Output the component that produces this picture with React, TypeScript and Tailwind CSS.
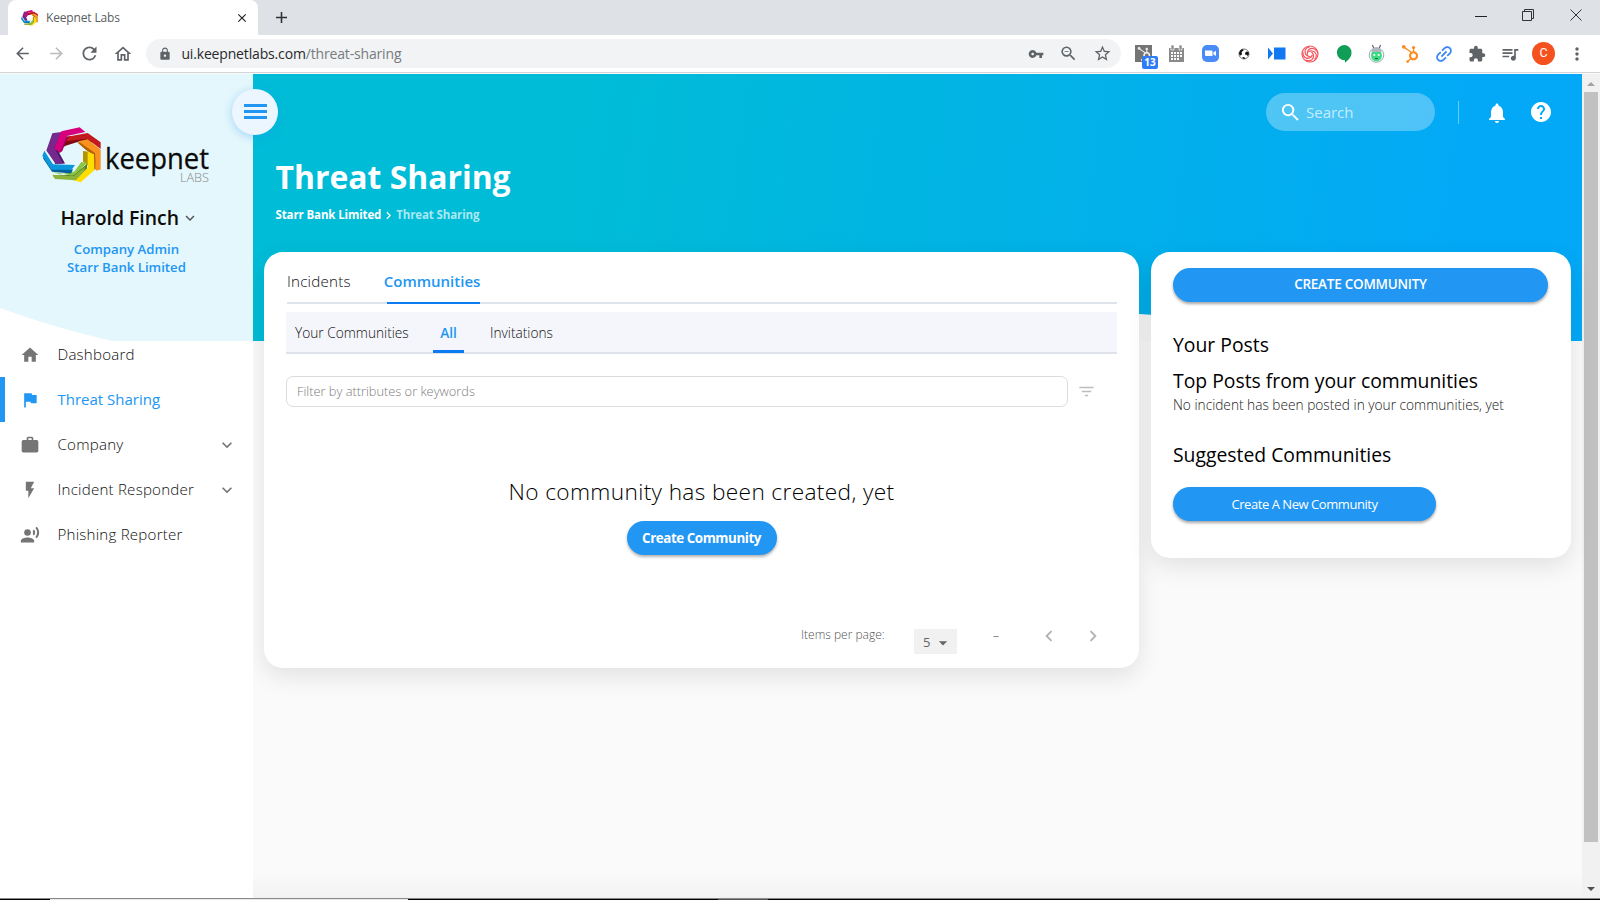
import type { ReactNode } from "react";
import {
  MdArrowBack,
  MdArrowForward,
  MdRefresh,
  MdOutlineHome,
  MdLock,
  MdVpnKey,
  MdOutlineZoomOut,
  MdStarBorder,
  MdExtension,
  MdQueueMusic,
  MdMoreVert,
  MdHome,
  MdFlag,
  MdWork,
  MdFlashOn,
  MdRecordVoiceOver,
  MdSearch,
  MdNotifications,
  MdHelp,
  MdFilterList,
  MdChevronLeft,
  MdChevronRight,
  MdExpandMore,
  MdArrowDropDown,
  MdClose,
  MdAdd,
  MdLink,
} from "react-icons/md";
import { FaHubspot } from "react-icons/fa";

function Ring({ width, height }: { width: number; height: number }) {
  return (
    <svg width={width} height={height} viewBox="127 171 177 170" preserveAspectRatio="none" className="shrink-0">
      <path d="M200 200L258 196L290 220L262 214L236 216L198 228L184 236z" fill="#7d0b10" />
      <path d="M206 200L264 189L303 217V238L262 207L200 214z" fill="#c4191f" />
      <path d="M183 187L188 195L169 232L196 282L166 283L160 235z" fill="#4a1769" />
      <path d="M158 190L184 186L164 235L190 282L168 283L140 242z" fill="#75298c" />
      <path d="M198 205L204 200L188 244L180 250L170 240z" fill="#9a005e" />
      <path d="M185 184L240 172L257 186L202 198L182 246L166 240L165 232z" fill="#d6007f" />
      <path d="M233 218L248 216L290 248L288 300L282 300L281 256L258 240z" fill="#b85f00" />
      <path d="M236 214L264 208L303 240V300L289 304L286 250L258 230z" fill="#f7931e" />
      <path d="M250 244L268 246V292L250 276z" fill="#b09500" />
      <path d="M264 246L283 254L284 302L243 339L222 333L264 294z" fill="#ffdd00" />
      <path d="M222 316L262 283V296L230 328L165 326L160 318z" fill="#4e7a22" />
      <path d="M155 306L182 315L224 306L245 277L262 280L232 310L218 319z" fill="#8dc63f" />
      <path d="M158 316L222 320L258 290L250 310L228 333L166 329z" fill="#8ab53a" />
      <path d="M136 254L160 294L220 300L214 312L157 307L130 266z" fill="#00619c" />
      <path d="M134 243L160 284L226 286L216 301L155 301L128 258z" fill="#0c97dd" />
    </svg>
  );
}

function Cell({ children }: { children: ReactNode }) {
  return <div className="flex w-[33.35px] shrink-0 items-center justify-center">{children}</div>;
}

function Browser() {
  return (
    <header className="h-[74px] shrink-0">
      <div className="flex h-[35px] bg-[#dee1e6]">
        <div className="ml-2 flex w-[250px] items-center rounded-t-lg bg-white pr-[9px] pl-[13px]">
          <Ring width={17} height={16} />
          <span className="ml-[8px] flex-1 text-[12px] tracking-[-0.150px] text-[#5a5d61]">Keepnet Labs</span>
          <MdClose size={14} color="#202124" />
        </div>
        <MdAdd size={19} color="#303235" className="mt-2 ml-[13.500px]" />
        <div className="ml-auto flex items-center gap-[36px] pr-[18px] pb-[5px]">
          <svg width="12" height="12" fill="none" stroke="#222" className="mt-px -mr-px">
            <path d="M0 6.5H12" />
          </svg>
          <svg width="12" height="12" fill="none" stroke="#333">
            <path d="M.5 2.5h9v9h-9z M2.5 2.5v-2h9v9h-2" />
          </svg>
          <svg width="12" height="12" fill="none" stroke="#333">
            <path d="M.5 .5l11 11M11.5 .5l-11 11" />
          </svg>
        </div>
      </div>
      <div className="flex h-[38px] items-center border-b border-[#d2d4d8] bg-white pl-[6px] text-[#5f6368]">
        <Cell><MdArrowBack size={19} /></Cell>
        <Cell><MdArrowForward size={19} color="#bbb" /></Cell>
        <Cell><MdRefresh size={21} /></Cell>
        <Cell><MdOutlineHome size={20} /></Cell>
        <div className="ml-[6.500px] flex h-[29px] w-[975px] items-center rounded-full bg-[#f1f3f4] pr-[2px]">
          <MdLock size={14} className="ml-[12px]" />
          <span className="ml-[9.500px] flex-1 text-[14px] tracking-[-0.160px] text-[#777b80]">
            <span className="text-[#27292c]">ui.keepnetlabs.com</span>/threat-sharing
          </span>
          <Cell><MdVpnKey size={16} /></Cell>
          <Cell><MdOutlineZoomOut size={19} /></Cell>
          <Cell><MdStarBorder size={19} /></Cell>
        </div>
        <div className="ml-[6px] flex">
          <Cell>
            <div className="relative flex h-[17px] w-[17px] items-center justify-center bg-[#757575]">
              <FaHubspot size={14} color="#eee" />
              <span className="absolute top-[11px] left-[7px] flex h-[13px] w-[16px] items-center justify-center rounded-[2px] bg-[#2f7df6] text-[10px] font-bold text-white">
                13
              </span>
            </div>
          </Cell>
          <Cell>
            <svg width="17" height="18" viewBox="0 0 17 18">
              <path d="M1 3h15v14H1z" fill="#8a8a8a" />
              <path d="M3 0h3v5H3zM11 0h3v5h-3z" fill="#8a8a8a" stroke="#fff" strokeWidth=".7" />
              <path d="M3 7h2v2H3zM6 7h2v2H6zM9 7h2v2H9zM12 7h2v2h-2zM3 10h2v2H3zM6 10h2v2H6zM9 10h2v2H9zM12 10h2v2h-2zM3 13h2v2H3zM6 13h2v2H6zM9 13h2v2H9z" fill="#fff" />
            </svg>
          </Cell>
          <Cell>
            <svg width="17" height="17" viewBox="0 0 17 17">
              <rect width="17" height="17" rx="5" fill="#4a8cf7" />
              <path d="M3 5.5h6.5q1 0 1 1V11H4q-1 0-1-1zM11.3 7.6L14 5.700v5.400l-2.700-1.900z" fill="#fff" />
            </svg>
          </Cell>
          <Cell>
            <svg width="12" height="12" viewBox="0 0 12 12">
              <circle cx="6" cy="6" r="5" fill="#fff" stroke="#555" strokeWidth=".8" />
              <path d="M1 5L2.500 2L5 1L5.500 2.500L3.500 4L4 6L3 7.500L1.500 7zM7 5L8.500 3.500L10.500 4L11 6.500L9 8L8.500 6.500L7.500 7zM4 9.500L6 9L7.500 10.500L6 11z" fill="#111" />
            </svg>
          </Cell>
          <Cell>
            <svg width="18" height="13" viewBox="0 0 18 13">
              <path d="M6 0.500h11.500v12H6zM0 0.500L5 6.500L0 12.500z" fill="#1178f2" />
            </svg>
          </Cell>
          <Cell>
            <svg width="18" height="18" viewBox="-9 -9 18 18" fill="none" stroke="#f4525b" strokeWidth="1.200">
              <circle r="8" />
              {[0, 72, 144, 216, 288].map((a) => (
                <path key={a} transform={`rotate(${a})`} d="M-1.500 -2 A4.500 4.500 0 0 1 4.500 5.500" />
              ))}
            </svg>
          </Cell>
          <Cell>
            <svg width="16" height="18" viewBox="0 0 16 18">
              <path d="M8 0a7.500 7.500 0 0 1 7.500 7.700c0 4-3 7.500-6.500 9.800v-2.300A7.500 7.500 0 1 1 8 0z" fill="#109d58" />
            </svg>
          </Cell>
          <Cell>
            <svg width="17" height="19" viewBox="0 0 17 19">
              <path d="M6 5L4.500 1M11 5L12.500 1" stroke="#555b70" strokeWidth="1.100" />
              <circle cx="8.500" cy="11" r="7.300" fill="#fff" stroke="#8a92a0" strokeWidth=".8" />
              <ellipse cx="8.500" cy="11.500" rx="5.500" ry="6" fill="#3ddc84" />
              <path d="M3.500 8a5 4.500 0 0 1 10 0z" fill="#aeb7c0" />
              <circle cx="6.300" cy="11" r="1.100" fill="#fff" />
              <circle cx="10.700" cy="11" r="1.100" fill="#fff" />
              <path d="M7 14.500h3" stroke="#245b40" />
            </svg>
          </Cell>
          <Cell><FaHubspot size={18} color="#ff8b1f" /></Cell>
          <Cell><MdLink size={22} color="#3b86f7" className="-rotate-45" /></Cell>
          <Cell><MdExtension size={18} /></Cell>
          <Cell><MdQueueMusic size={20} /></Cell>
          <Cell>
            <div className="flex h-[23px] w-[23px] items-center justify-center rounded-full bg-[#f4511e] font-[Roboto] text-[12.5px] text-white">
              C
            </div>
          </Cell>
          <Cell><MdMoreVert size={20} /></Cell>
        </div>
      </div>
    </header>
  );
}

function Logo() {
  return (
    <div className="mt-[53px] ml-[42px] flex h-[58px]">
      <Ring width={59} height={56} />
      <svg width="112" height="58" viewBox="0 0 112 58" className="overflow-visible">
        <text x="4" y="42" fontSize="30" textLength="104" lengthAdjust="spacingAndGlyphs" fill="#0b0b0b" stroke="#0b0b0b" strokeWidth=".3">
          keepnet
        </text>
        <text x="79" y="54.500" fontSize="13" fontWeight="300" textLength="29" lengthAdjust="spacingAndGlyphs" fill="#888">
          LABS
        </text>
      </svg>
    </div>
  );
}

function NavItem({ icon, label, active, more }: { icon: ReactNode; label: string; active?: boolean; more?: boolean }) {
  return (
    <div
      className={
        active
          ? "flex h-[45px] items-center border-l-[5px] border-[#2196f3] text-[#2196f3]"
          : "flex h-[45px] items-center border-l-[5px] border-transparent text-[#757575]"
      }
    >
      <span className="ml-[14px] flex w-[22px] justify-center">{icon}</span>
      <span
        className={
          active
            ? "ml-[16.500px] flex-1 text-[15px]"
            : "ml-[16.500px] flex-1 text-[15.100px] font-light tracking-[0.220px] text-[#111]"
        }
      >
        {label}
      </span>
      {more && <MdExpandMore size={20} className="mr-[16px]" />}
    </div>
  );
}

function Sidebar() {
  return (
    <aside className="relative z-10 w-[253px] shrink-0 bg-white">
      <div className="relative h-[267px] bg-[#e4f7fc]">
        <svg className="absolute bottom-0 left-0" width="112" height="33">
          <path d="M0 0Q55 20 112 33H0z" fill="#fff" />
        </svg>
        <div className="flex h-full flex-col">
          <Logo />
          <div className="mt-[21px] flex h-[24px] items-center pl-[60.500px] text-[19.400px] font-semibold text-[#0c0c0c]">
            Harold Finch
            <MdExpandMore size={18} color="#555" className="ml-[2px]" />
          </div>
          <div className="mt-[10px] h-[18.500px] text-center text-[13.200px] leading-[18.500px] font-semibold text-[#2196f3]">
            Company Admin
          </div>
          <div className="h-[18px] text-center text-[13.200px] leading-[17px] font-semibold text-[#2196f3]">
            Starr Bank Limited
          </div>
        </div>
        <button className="absolute top-[14.500px] left-[232px] flex h-[46px] w-[46px] flex-col items-center justify-center gap-[3px] rounded-full bg-[#ecf6ff] shadow-[0_2px_10px_rgba(33,150,243,0.350)]">
          <span className="h-[3px] w-[23px] bg-[#2196f3]" />
          <span className="h-[3px] w-[23px] bg-[#2196f3]" />
          <span className="h-[3px] w-[23px] bg-[#2196f3]" />
        </button>
      </div>
      <nav className="-mt-[9px]">
        <NavItem icon={<MdHome size={20} />} label="Dashboard" />
        <NavItem icon={<MdFlag size={20} />} label="Threat Sharing" active />
        <NavItem icon={<MdWork size={20} />} label="Company" more />
        <NavItem icon={<MdFlashOn size={20} />} label="Incident Responder" more />
        <NavItem icon={<MdRecordVoiceOver size={20} />} label="Phishing Reporter" />
      </nav>
    </aside>
  );
}

function Communities() {
  return (
    <section className="flex h-[416px] w-[875px] flex-col rounded-[19px] bg-white px-[22px] shadow-[0_8px_24px_rgba(0,0,0,0.100)]">
      <div className="ml-px flex h-[52px] gap-[33px] border-b-2 border-[#dfe3ec] text-[15px] leading-[59px] text-[#555]">
        <span className="text-[15.200px] font-light tracking-[0.200px] text-[#111]">Incidents</span>
        <span className="relative h-[52px] font-semibold text-[#2196f3]">
          Communities
          <span className="absolute right-0 bottom-0 left-[3px] h-[2px] bg-[#0d7bf2]" />
        </span>
      </div>
      <div className="mt-[8px] flex h-[42px] border-b-2 border-[#dfe2ea] bg-[#f5f6fb] pl-[9px] text-[13.700px] leading-[41px] whitespace-nowrap text-[#111]">
        <span className="w-[113px] font-light">Your Communities</span>
        <span className="ml-[25px] h-[41px] w-[31px] border-b-[3px] border-[#0d7bf2] text-center font-semibold text-[#2196f3]">All</span>
        <span className="ml-[26px] font-light">Invitations</span>
      </div>
      <div className="mt-[22px] flex items-center">
        <div className="flex h-[31px] w-[782px] items-center rounded-[7px] border border-[#dcdcdc] pl-[10px] text-[12.800px] font-light text-[#7c7c7c]">
          Filter by attributes or keywords
        </div>
        <MdFilterList size={19} color="#bdbdbd" className="ml-[9px]" />
      </div>
      <div className="mt-[70px] flex flex-col items-center">
        <div className="h-[30px] text-[22.700px] leading-[30px] font-light tracking-[0.350px] text-black">No community has been created, yet</div>
        <button className="mt-[14px] h-[34px] w-[150px] rounded-full bg-[#2196f3] text-[13.400px] leading-[33px] font-bold tracking-[-0.450px] text-white shadow-[0_2px_3px_rgba(0,0,0,0.300)]">
          Create Community
        </button>
      </div>
      <div className="mt-[74px] flex h-[26px] text-[12px] text-[#8a8a8a]">
        <span className="ml-[515px] w-[113px] leading-[12px] font-light text-[#555]">Items per page:</span>
        <span className="flex h-[25px] w-[43px] items-center bg-[#f1f1f1] pt-[2px] pl-[9px] text-[13px] text-[#666]">
          5
          <MdArrowDropDown size={20} className="ml-[3px]" />
        </span>
        <span className="ml-[36px] w-[45px] leading-[14px]">–</span>
        <MdChevronLeft size={22} color="#b0b0b0" className="-mt-[4px]" />
        <MdChevronRight size={22} color="#b0b0b0" className="-mt-[4px] ml-[22px]" />
      </div>
    </section>
  );
}

function Aside() {
  return (
    <section className="flex h-[306px] w-[420px] flex-col rounded-[19px] bg-white px-[22px] pt-[16px] text-black shadow-[0_8px_24px_rgba(0,0,0,0.100)]">
      <button className="h-[34px] w-[375px] rounded-full bg-[#2196f3] text-[13.500px] leading-[32px] font-semibold tracking-[-0.250px] text-white shadow-[0_2px_3px_rgba(0,0,0,0.350)]">
        <span className="block h-[34px]">CREATE COMMUNITY</span>
      </button>
      <h2 className="mt-[29px] h-[28px] text-[19.350px] leading-[28px]">Your Posts</h2>
      <h2 className="mt-[8px] h-[28px] text-[19.350px] leading-[28px]">Top Posts from your communities</h2>
      <p className="h-[20px] text-[13.700px] leading-[20px] font-light text-[#222]">No incident has been posted in your communities, yet</p>
      <h2 className="mt-[26px] h-[28px] text-[19.350px] leading-[28px]">Suggested Communities</h2>
      <button className="mt-[18px] h-[34px] w-[263px] rounded-full bg-[#2196f3] text-[13px] leading-[34px] font-medium tracking-[-0.450px] text-white shadow-[0_2px_3px_rgba(0,0,0,0.350)]">
        Create A New Community
      </button>
    </section>
  );
}

export default function App() {
  return (
    <div className="flex h-[900px] w-[1600px] flex-col overflow-hidden bg-[#fafafa] font-['Open_Sans',sans-serif]">
      <Browser />
      <div className="flex h-[824px] shrink-0">
        <Sidebar />
        <main className="relative w-[1329px] shrink-0 bg-linear-to-b from-[#fafafa] from-97% to-[#f2f2f2]">
          <div className="absolute inset-x-0 top-0 h-[267px] bg-[linear-gradient(98deg,#00bcd7_25%,#03a9f6_90%)]">
            <svg className="absolute bottom-0 left-[401px]" width="900" height="30">
              <path d="M0 30Q300 -18 485 3L900 30z" fill="#f7f7f7" />
            </svg>
          </div>
          <div className="relative flex h-full flex-col">
            <div className="flex h-[58px] items-end justify-end pr-[29px] text-white">
              <div className="mb-px flex h-[38px] w-[169px] items-center rounded-full bg-white/30 pl-[13px] text-[15px] text-[#c5edff]">
                <MdSearch size={23} color="#fff" className="mr-[4px]" />
                Search
              </div>
              <span className="mb-[8px] ml-[23px] h-[23px] w-px bg-white/40" />
              <MdNotifications size={24} className="mb-[7px] ml-[26px]" />
              <MdHelp size={24} className="mb-[8px] ml-[20px]" />
            </div>
            <h1 className="mt-[23px] ml-[22.500px] h-[44px] text-[31.900px] leading-[44px] font-bold text-white">Threat Sharing</h1>
            <div className="mt-[8px] ml-[22.500px] flex h-[16px] items-center text-[11.500px] font-bold tracking-[-0.120px] text-[#a9e8f3]">
              <span className="text-white">Starr Bank Limited</span>
              <MdChevronRight size={15} color="#fff" />
              <span>Threat Sharing</span>
            </div>
            <div className="mt-[29px] ml-[11px] flex items-start gap-[12px]">
              <Communities />
              <Aside />
            </div>
          </div>
        </main>
        <div className="flex w-[18px] flex-col items-center bg-[#f1f1f1]">
          <svg width="17" height="18">
            <path d="M4 12l4-4 4 4z" fill="#a3a3a3" />
          </svg>
          <div className="h-[750px] w-[14px] bg-[#c1c1c1]" />
          <svg width="17" height="18" className="mt-auto">
            <path d="M4 7h8l-4 4z" fill="#505050" />
          </svg>
        </div>
      </div>
      <footer className="flex h-[2px] border-t border-[#8a8a8a] bg-black">
        <span className="ml-[50px] w-[358px] bg-[#e8e8e8]" />
        <span className="ml-[310px] w-[50px] bg-[#555]" />
      </footer>
    </div>
  );
}
